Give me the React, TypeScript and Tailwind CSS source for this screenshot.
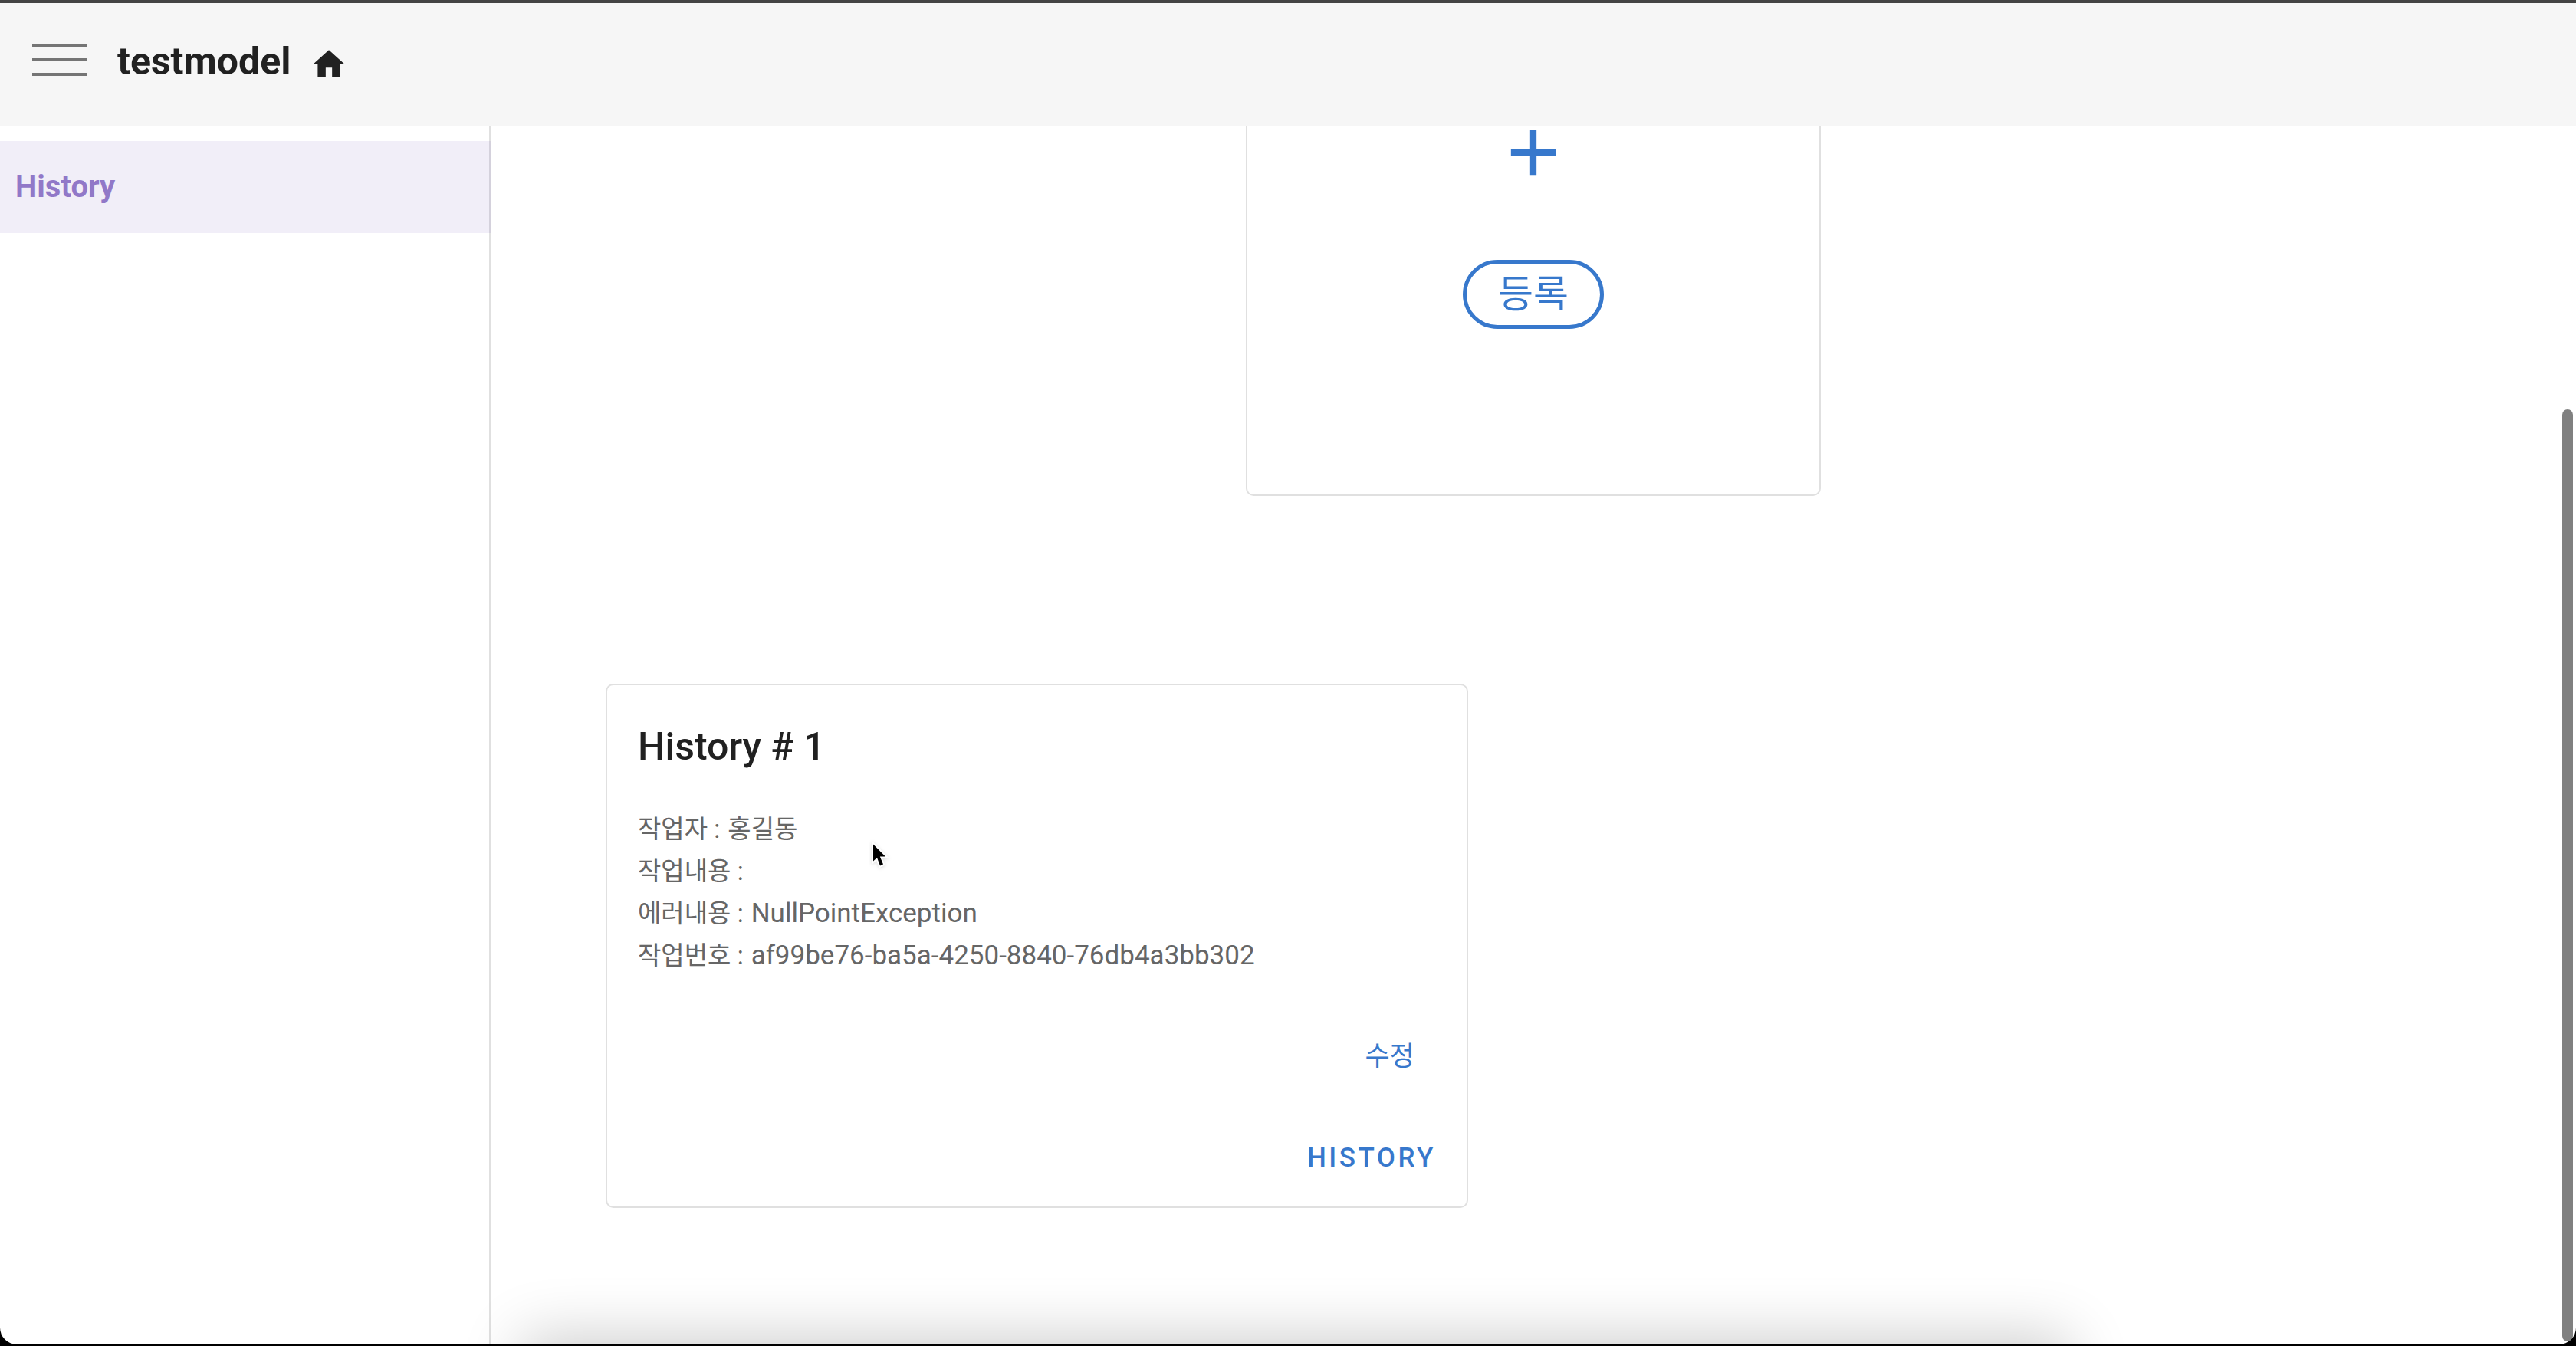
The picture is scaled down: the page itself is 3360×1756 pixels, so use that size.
import React from "react";

const details = [
  { label: "작업자", value: "홍길동", korean: true },
  { label: "작업내용", value: "", korean: true },
  { label: "에러내용", value: "NullPointException", korean: false },
  { label: "작업번호", value: "af99be76-ba5a-4250-8840-76db4a3bb302", korean: false },
];

function HomeIcon() {
  return (
    <svg viewBox="0 0 24 24" className="size-[50px] fill-current" aria-hidden="true">
      <path d="M10,20V14H14V20H19V12H22L12,3L2,12H5V20H10Z" />
    </svg>
  );
}

function PlusIcon() {
  return (
    <svg viewBox="0 0 24 24" className="size-[100px] fill-current" aria-hidden="true">
      <path d="M19,13H13V19H11V13H5V11H11V5H13V11H19V13Z" />
    </svg>
  );
}

function Header() {
  return (
    <header className="relative z-10 flex h-[164px] shrink-0 items-start border-t-4 border-[#444444] bg-[#f6f6f6] px-[42px] text-[#212121]">
      <button type="button" aria-label="Menu" className="mt-[53px] flex w-[71px] flex-col gap-[15px]">
        <span className="h-1 w-full bg-[#757575]" />
        <span className="h-1 w-full bg-[#757575]" />
        <span className="h-1 w-full bg-[#757575]" />
      </button>
      <h1 className="mt-[44px] ml-10 text-[50px] leading-[64px] font-bold">testmodel</h1>
      <a href="#home" aria-label="Home" className="mt-[55px] ml-[25px]">
        <HomeIcon />
      </a>
    </header>
  );
}

function Sidebar() {
  return (
    <nav className="w-[640px] shrink-0 border-r-2 border-[#e0e0e0] pt-5">
      <a
        href="#history"
        className="-mr-0.5 flex h-[120px] items-center border-r-2 border-[#d4d1dc] bg-[#f1eef8] px-5 text-[40px] font-bold text-[#9178c8]"
      >
        History
      </a>
    </nav>
  );
}

function RegisterCard() {
  return (
    <section className="-mt-[15px] flex w-[750px] flex-col items-center self-center rounded-b-[10px] border-2 border-t-0 border-[#e0e0e0] pb-[216px] text-[#3778cc]">
      <PlusIcon />
      <button
        type="button"
        className="mt-[90px] flex h-[90px] w-[184px] items-center justify-center rounded-full border-[5px] border-current text-[50px] leading-none"
      >
        등록
      </button>
    </section>
  );
}

function HistoryCard() {
  return (
    <article className="mt-[245px] ml-[150px] flex w-[1125px] flex-col rounded-[10px] border-2 border-[#e0e0e0] px-10 pt-10 pb-[18px]">
      <h2 className="text-[50px] leading-[80px] font-medium text-[#212121]">History # 1</h2>
      <dl className="mt-10 leading-[55px] text-[#666666]">
        {details.map((d) => (
          <div key={d.label} className="flex items-baseline gap-2.5">
            <dt className="text-[33px]">{d.label} :</dt>
            <dd className={d.korean ? "text-[33px]" : "text-[35px]"}>{d.value}</dd>
          </div>
        ))}
      </dl>
      <div className="mt-[60px] flex flex-col items-end text-[#3778cc]">
        <button type="button" className="mr-[28px] h-[90px] text-[35px]">
          수정
        </button>
        <button type="button" className="mt-[42px] h-[90px] text-[35px] font-medium tracking-widest">
          HISTORY
        </button>
      </div>
    </article>
  );
}

function Pointer() {
  return (
    <svg
      viewBox="0 0 24 40"
      className="pointer-events-none absolute top-[1096px] left-[1136px] h-[40px] w-[24px] drop-shadow-sm"
      aria-hidden="true"
    >
      <path
        d="M3 5.500V27.500L8 23L12 33.500L16 31.500L11.800 21.500H19Z"
        fill="#000"
        stroke="#fff"
        strokeWidth="4"
        paintOrder="stroke"
      />
    </svg>
  );
}

export default function App() {
  return (
    <div className="h-screen bg-black pb-0.5 font-['Roboto','Noto_Sans_CJK_KR',sans-serif]">
      <div className="relative flex h-full flex-col overflow-hidden rounded-b-[22px] bg-white">
        <Header />
        <div className="flex min-h-0 flex-1">
          <Sidebar />
          <main className="flex min-w-0 flex-1 flex-col">
            <RegisterCard />
            <HistoryCard />
          </main>
        </div>
        <div className="absolute right-1 bottom-1 h-[1216px] w-[14px] rounded-full bg-[#808080]" />
        <div className="absolute top-full right-[670px] left-[690px] h-[100px] shadow-[0_0_80px_10px_rgba(0,0,0,0.2)]" />
        <Pointer />
      </div>
    </div>
  );
}
